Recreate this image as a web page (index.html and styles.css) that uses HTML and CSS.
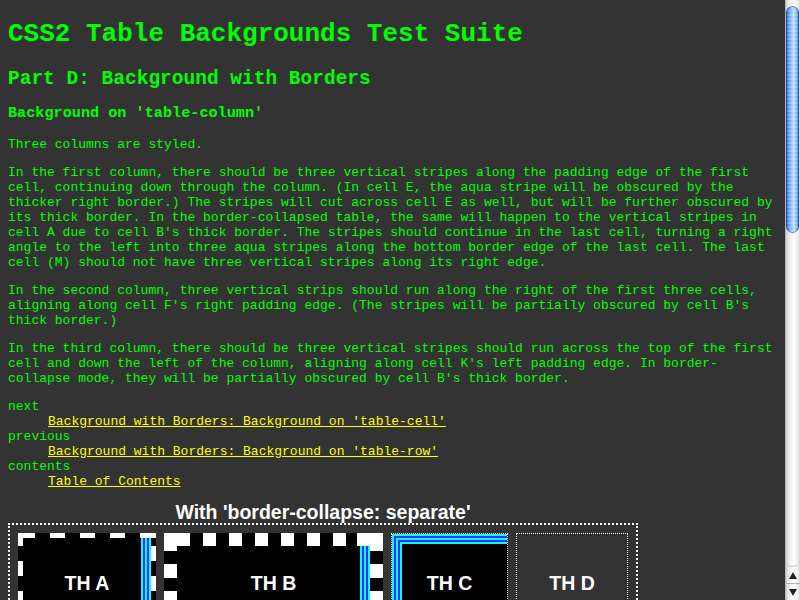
FILE: index.html
```html
<!DOCTYPE html>
<html>
<head>
<meta charset="utf-8">
<title>CSS2 Table Backgrounds Test Suite</title>
<link rel="stylesheet" href="styles.css">
</head>
<body>
<h1>CSS2 Table Backgrounds Test Suite</h1>
<h2>Part D: Background with Borders</h2>
<h3>Background on 'table-column'</h3>
<p class="lead">Three columns are styled.</p>
<p>In the first column, there should be three vertical stripes along the padding edge of the first cell, continuing down through the column. (In cell E, the aqua stripe will be obscured by the thicker right border.) The stripes will cut across cell E as well, but will be further obscured by its thick border. In the border-collapsed table, the same will happen to the vertical stripes in cell A due to cell B's thick border. The stripes should continue in the last cell, turning a right angle to the left into three aqua stripes along the bottom border edge of the last cell. The last cell (M) should not have three vertical stripes along its right edge.</p>
<p>In the second column, three vertical strips should run along the right of the first three cells, aligning along cell F's right padding edge. (The stripes will be partially obscured by cell B's thick border.)</p>
<p class="last">In the third column, there should be three vertical stripes should run across the top of the first cell and down the left of the column, aligning along cell K's left padding edge. In border-collapse mode, they will be partially obscured by cell B's thick border.</p>
<dl class="nav">
  <dt>next</dt>
  <dd><a href="#">Background with Borders: Background on 'table-cell'</a></dd>
  <dt>previous</dt>
  <dd><a href="#">Background with Borders: Background on 'table-row'</a></dd>
  <dt>contents</dt>
  <dd><a href="#">Table of Contents</a></dd>
</dl>
<div class="demo">
  <div class="demo-caption">With 'border-collapse: separate'</div>
  <div class="demo-table">
    <div class="cell cell-a">TH A</div>
    <div class="cell cell-b">TH B</div>
    <div class="cell cell-c">TH C</div>
    <div class="cell cell-d">TH D</div>
  </div>
</div>
<div class="scrollbar">
  <div class="track"><div class="thumb"></div></div>
  <div class="buttons">
    <div class="btn"><span class="arrow-up"></span></div>
    <div class="btn"><span class="arrow-down"></span></div>
  </div>
</div>
</body>
</html>
```
FILE: styles.css
```css
html {
  overflow: hidden;
  background: #333333;
}
body {
  margin: 0 23px 0 8px;
  padding-top: 19px;
  background: #333333;
  color: #00ff00;
  font-family: "Liberation Mono", "DejaVu Sans Mono", monospace;
  font-size: 13px;
  line-height: 15px;
}
h1 {
  font-size: 26px;
  line-height: normal;
  margin: 0 0 19px;
}
h2 {
  font-size: 19.5px;
  line-height: normal;
  margin: 0 0 14px;
}
h3 {
  font-size: 15.2px;
  line-height: normal;
  margin: 0 0 15px;
}
p {
  margin: 0 0 13px;
}
p.last {
  margin-bottom: 13px;
}
.nav {
  margin: 0 0 13px;
}
.nav dd {
  margin-left: 40px;
}
.nav a {
  color: #ffff00;
  text-decoration: underline;
}
.demo {
  width: 630px;
}
.demo-caption {
  text-align: center;
  color: #ffffff;
  font-family: "Liberation Sans", Arial, sans-serif;
  font-weight: bold;
  font-size: 19.5px;
  line-height: 21px;
}
.demo-table {
  display: flex;
  gap: 8px;
  padding: 8px;
  border: 2px dotted #ffffff;
  align-items: flex-start;
}
.cell {
  flex: none;
  box-sizing: border-box;
  height: 100px;
  display: flex;
  align-items: center;
  justify-content: center;
  color: #ffffff;
  font-family: "Liberation Sans", Arial, sans-serif;
  font-weight: bold;
  font-size: 19.5px;
}
.cell-a {
  width: 138px;
  border: 5px solid transparent;
  background:
    repeating-linear-gradient(to right, #ffffff 0 15px, transparent 15px 30px) 2px 0 / 131px 5px no-repeat border-box,
    repeating-linear-gradient(to right, #ffffff 0 15px, transparent 15px 30px) 2px 100% / 131px 5px no-repeat border-box,
    repeating-linear-gradient(to bottom, #ffffff 0 15px, transparent 15px 30px) 0 -2px / 5px calc(100% + 2px) no-repeat border-box,
    linear-gradient(#ffffff, #ffffff) right 0 top 0 / 5px 5px no-repeat border-box,
    repeating-linear-gradient(to bottom, #ffffff 0 15px, transparent 15px 30px) right 0 top 13px / 5px 100% no-repeat border-box,
    repeating-linear-gradient(to right, #00ffff 0 2px, #3a2cff 2px 4px) right 5px top 5px / 10px calc(100% - 5px) no-repeat border-box,
    #000000;
}
.cell-b {
  width: 219px;
  border: 13px solid transparent;
  background:
    repeating-linear-gradient(to right, #ffffff 0 13px, transparent 13px 26px) 13px 0 / 180px 13px no-repeat border-box,
    linear-gradient(#ffffff, #ffffff) 0 0 / 13px 4px no-repeat border-box,
    linear-gradient(#ffffff, #ffffff) right 0 top 0 / 26px 13px no-repeat border-box,
    repeating-linear-gradient(to bottom, #ffffff 0 13.5px, transparent 13.5px 27px) 0 3.5px / 13px 100% no-repeat border-box,
    repeating-linear-gradient(to bottom, #ffffff 0 13.5px, transparent 13.5px 27px) right 0 top 3.5px / 13px 100% no-repeat border-box,
    repeating-linear-gradient(to right, #ffffff 0 13px, transparent 13px 26px) 13px 100% / 180px 13px no-repeat border-box,
    repeating-linear-gradient(to right, #00ffff 0 2px, #3a2cff 2px 4px) right 13px top 13px / 10px calc(100% - 13px) no-repeat border-box,
    #000000;
}
.cell-c {
  width: 117px;
  border: 1px dotted #ffffff;
  background: #000000;
  box-shadow:
    inset 2px 2px 0 #00ffff,
    inset 4px 4px 0 #3a2cff,
    inset 6px 6px 0 #00ffff,
    inset 8px 8px 0 #3a2cff,
    inset 10px 10px 0 #00ffff;
}
.cell-d {
  width: 112px;
  border: 1px dotted #ffffff;
}
.scrollbar {
  position: fixed;
  top: 0;
  right: 0;
  width: 15px;
  height: 100%;
  display: flex;
  flex-direction: column;
  background: linear-gradient(to right, #9a9a9a 0, #cfcfcf 1px, #e6e6e6 3px, #f8f8f8 7px, #ffffff 9px, #ececec 13px, #d6d6d6 15px);
}
.track {
  flex: 1;
  padding: 6px 1px 0 1px;
  border-bottom: 1px solid #c4c4c4;
  border-radius: 0 0 7px 7px;
}
.thumb {
  height: 227px;
  border-radius: 7px;
  background:
    repeating-linear-gradient(to bottom, rgba(255, 255, 255, 0.18) 0 2px, rgba(0, 0, 0, 0) 2px 4px),
    linear-gradient(to right, #1546bf 0, #4f8fe8 2px, #8cc0f7 5px, #bfe0ff 8px, #8ec2f6 10px, #4f8fe8 12px, #1f55c8 13px);
  box-shadow: inset 0 0 0 1px rgba(10, 50, 160, 0.55);
}
.buttons {
  height: 33px;
  display: flex;
  flex-direction: column;
}
.btn {
  flex: 1;
  display: flex;
  align-items: center;
  justify-content: center;
}
.btn + .btn {
  border-top: 1px solid #b8b8b8;
}
.arrow-up {
  width: 0;
  height: 0;
  border-left: 4px solid transparent;
  border-right: 4px solid transparent;
  border-bottom: 7px solid #222222;
}
.arrow-down {
  width: 0;
  height: 0;
  border-left: 4px solid transparent;
  border-right: 4px solid transparent;
  border-top: 7px solid #222222;
}
```
